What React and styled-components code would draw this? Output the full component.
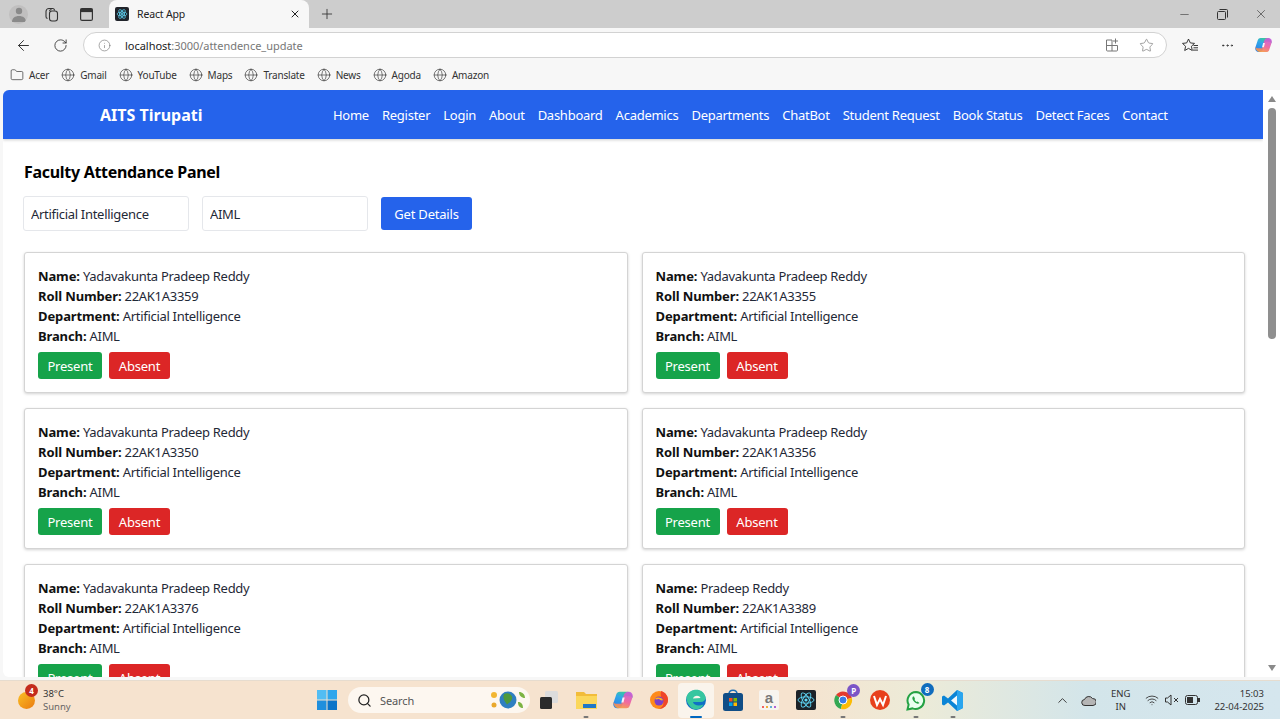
import React from 'react';
import styled, { createGlobalStyle } from 'styled-components';
import {
  ArrowLeft, RotateCw, Info, Star, Folder, Globe, X, Plus, Minus, MoreHorizontal,
  Search, ChevronUp, Wifi,
} from 'lucide-react';

const GlobalStyle = createGlobalStyle`
  html, body { margin: 0; padding: 0; height: 100%; overflow: hidden; }
  body { font-family: "Noto Sans", "Open Sans", sans-serif; }
  * { box-sizing: border-box; }
`;

const FONT = '"Noto Sans", "Open Sans", sans-serif';

const Screen = styled.div`
  width: 1280px;
  height: 719px;
  display: flex;
  flex-direction: column;
  overflow: hidden;
  background: #f7f7f7;
  font-family: ${FONT};
`;

const TabStrip = styled.div`
  height: 28px;
  background: #cdcdcd;
  display: flex;
  align-items: center;
  padding-left: 9px;
  color: #333;
`;

const Avatar = styled.div`
  width: 19px;
  height: 19px;
  border-radius: 50%;
  background: #c0bfbf;
  display: flex;
  align-items: center;
  justify-content: center;
  overflow: hidden;
  margin-right: 14px;
`;

const StripIcon = styled.div`
  width: 19px;
  display: flex;
  justify-content: center;
  margin-right: ${(p) => p.$mr || 0}px;
  margin-left: ${(p) => p.$ml || 0}px;
`;

const Tab = styled.div`
  width: 200px;
  height: 28px;
  background: #f7f7f7;
  border-radius: 8px 8px 0 0;
  display: flex;
  align-items: center;
  padding: 0 8px 0 6px;
  font-size: 10.5px;
  letter-spacing: -0.15px;
  color: #222;
`;

const Favicon = styled.div`
  width: 14px;
  height: 14px;
  border-radius: 2px;
  background: #20232a;
  margin-right: 8px;
  display: flex;
  align-items: center;
  justify-content: center;
`;

const TabTitle = styled.span`
  flex: 1;
`;

const WindowControls = styled.div`
  margin-left: auto;
  display: flex;
  align-items: center;
  gap: 26px;
  padding-right: 12px;
`;

const Toolbar = styled.div`
  height: 34px;
  display: flex;
  align-items: center;
  padding-left: 15px;
  color: #333;
`;

const ToolButton = styled.div`
  width: 17px;
  display: flex;
  justify-content: center;
  margin-right: ${(p) => p.$mr || 0}px;
  margin-left: ${(p) => p.$ml || 0}px;
`;

const AddressBar = styled.div`
  width: 1084px;
  height: 26px;
  margin-left: 14px;
  border: 1px solid #d2d2d2;
  border-radius: 13px;
  background: #fff;
  display: flex;
  align-items: center;
  padding: 0 12px 0 14px;
  font-size: 11px;
  letter-spacing: -0.03px;
  color: #777;
`;

const Host = styled.span`
  color: #222;
`;

const UrlText = styled.span`
  margin-left: 14px;
  flex: 1;
`;

const AppsIcon = styled.span`
  display: flex;
  margin-right: 19px;
`;

const Bookmarks = styled.div`
  height: 27px;
  padding-bottom: 1px;
  display: flex;
  align-items: center;
  padding-left: 10px;
  font-size: 10px;
  letter-spacing: -0.2px;
  color: #333;
  gap: 12px;
`;

const Bookmark = styled.div`
  display: flex;
  align-items: center;
  gap: 5px;
`;

const Viewport = styled.div`
  height: 587px;
  margin: 1px 0 3px 3px;
  display: flex;
  background: #fff;
  border-radius: 6px 0 0 6px;
  overflow: hidden;
`;

const Page = styled.div`
  flex: 1;
  min-width: 0;
  overflow: hidden;
`;

const Scrollbar = styled.div`
  width: 17px;
  background: #fff;
  position: relative;
  display: flex;
  flex-direction: column;
  align-items: center;
  padding-top: 6px;
`;

const ScrollThumb = styled.div`
  width: 8px;
  height: 231px;
  margin-top: 6px;
  border-radius: 4px;
  background: #8f8f8f;
`;

const ArrowUp = styled.div`
  width: 0;
  height: 0;
  border-left: 4px solid transparent;
  border-right: 4px solid transparent;
  border-bottom: 6px solid #8a8a8a;
`;

const ArrowDown = styled.div`
  position: absolute;
  bottom: 6px;
  width: 0;
  height: 0;
  border-left: 4px solid transparent;
  border-right: 4px solid transparent;
  border-top: 6px solid #8a8a8a;
`;

const Nav = styled.nav`
  height: 49px;
  background: #2563eb;
  display: flex;
  align-items: center;
  padding-left: 97px;
  color: #fff;
  box-shadow: 0 1px 3px rgba(0, 0, 0, 0.2);
`;

const Brand = styled.div`
  font-size: 16px;
  font-weight: 700;
  width: 233px;
`;

const NavLinks = styled.div`
  display: flex;
  gap: 13px;
  font-size: 13px;
  letter-spacing: -0.26px;
`;

const Content = styled.main`
  padding: 22px 20px 0 21px;
`;

const Heading = styled.h2`
  margin: 0;
  font-size: 16px;
  line-height: 22px;
  font-weight: 700;
  letter-spacing: -0.3px;
  color: #000;
`;

const Filters = styled.div`
  display: flex;
  align-items: center;
  gap: 13px;
  margin: 13px 0 0 -1px;
`;

const FilterInput = styled.input`
  width: 166px;
  height: 35px;
  border: 1px solid #e5e7eb;
  border-radius: 3px;
  padding: 0 7px;
  font: 13px ${FONT};
  letter-spacing: -0.3px;
  color: #1f2937;
  background: #fff;
  outline: none;
`;

const Btn = styled.button`
  border: 0;
  color: #fff;
  font-family: ${FONT};
  letter-spacing: -0.2px;
  border-radius: 3px;
  background: ${(p) => p.$bg};
  font-size: 13px;
  height: ${(p) => p.$h || 27}px;
  width: ${(p) => p.$w}px;
  padding: 0;
`;

const Grid = styled.div`
  display: grid;
  grid-template-columns: 603.5px 603.5px;
  column-gap: 14px;
  row-gap: 15px;
  margin-top: 21px;
`;

const Card = styled.div`
  height: 141px;
  border: 1px solid #d4d4d4;
  border-radius: 3px;
  padding: 13px 13px 0;
  box-shadow: 0 1px 3px rgba(0, 0, 0, 0.18);
  background: #fff;
`;

const Line = styled.div`
  font-size: 13px;
  line-height: 20px;
  letter-spacing: -0.3px;
  color: #1f2937;
  b { color: #111; font-weight: 700; letter-spacing: -0.12px; }
`;

const Actions = styled.div`
  display: flex;
  gap: 7px;
  margin-top: 6px;
`;

const Taskbar = styled.div`
  flex: 1;
  min-height: 0;
  border-top: 1px solid #e6dccf;
  background: linear-gradient(90deg, #f6e3cf 0%, #f6e3cf 62%, #ecebd8 72%, #d3e5ea 85%, #d5e6ee 100%);
  display: flex;
  align-items: center;
  color: #333;
`;

const Weather = styled.div`
  width: 317px;
  padding-left: 18px;
  display: flex;
  align-items: center;
  gap: 8px;
  font-size: 9.5px;
  line-height: 13px;
`;

const Sun = styled.div`
  width: 17px;
  height: 17px;
  border-radius: 50%;
  background: linear-gradient(135deg, #fbbf24, #ea7a10);
  position: relative;
`;

const Badge = styled.span`
  position: absolute;
  top: ${(p) => p.$top}px;
  right: ${(p) => p.$right}px;
  width: 13px;
  height: 13px;
  border-radius: 50%;
  color: #fff;
  background: ${(p) => p.$bg};
  font-size: 8px;
  font-weight: 700;
  line-height: 13px;
  text-align: center;
`;

const MutedText = styled.div`
  color: #666;
`;

const SearchBox = styled.div`
  width: 182px;
  height: 26px;
  margin-left: 11px;
  border-radius: 13px;
  background: #fdf7f0;
  display: flex;
  align-items: center;
  padding-left: 9px;
  font-size: 11px;
  letter-spacing: -0.1px;
  color: #555;
  gap: 8px;
`;

const SearchArt = styled.div`
  margin-left: auto;
  margin-right: 4px;
  display: flex;
`;

const TaskIcons = styled.div`
  display: flex;
  margin-left: 1px;
`;

const TaskIcon = styled.div`
  width: 36.700px;
  height: 35px;
  display: flex;
  align-items: center;
  justify-content: center;
  position: relative;
  border-radius: 4px;
  background: ${(p) => (p.$active ? '#faf4ec' : 'transparent')};
`;

const RunDot = styled.span`
  position: absolute;
  bottom: 0;
  left: 50%;
  transform: translateX(-50%);
  width: ${(p) => (p.$active ? 12 : 5)}px;
  height: 2px;
  border-radius: 1px;
  background: ${(p) => (p.$active ? '#0067c0' : '#777')};
`;

const Tray = styled.div`
  margin-left: auto;
  display: flex;
  align-items: center;
  padding-right: 16px;
  font-size: 9.5px;
  color: #333;
`;

const Lang = styled.div`
  text-align: center;
  line-height: 13px;
  margin: 0 15px 0 15px;
`;

const Clock = styled.div`
  text-align: right;
  line-height: 13px;
  margin-left: 14px;
`;

const TrayGroup = styled.div`
  display: flex;
  align-items: center;
  gap: 6px;
`;

const StudentLine = ({ label, value }) => (
  <Line>
    <b>{label}:</b> {value}
  </Line>
);

const ReactMark = ({ size = 12 }) => (
  <svg width={size} height={size} viewBox="0 0 24 24" fill="none" stroke="#61dafb" strokeWidth="1.4">
    <circle cx="12" cy="12" r="2" fill="#61dafb" stroke="none" />
    <ellipse cx="12" cy="12" rx="10" ry="4" />
    <ellipse cx="12" cy="12" rx="10" ry="4" transform="rotate(60 12 12)" />
    <ellipse cx="12" cy="12" rx="10" ry="4" transform="rotate(120 12 12)" />
  </svg>
);

const CopilotMark = ({ id, size = 20 }) => (
  <svg width={size} height={size} viewBox="0 0 24 24">
    <defs>
      <linearGradient id={`${id}-l`} x1="0.2" y1="1" x2="0.7" y2="0">
        <stop offset="0" stopColor="#2b7fe8" />
        <stop offset="0.6" stopColor="#30a8e8" />
        <stop offset="1" stopColor="#3bd08a" />
      </linearGradient>
      <linearGradient id={`${id}-r`} x1="0.7" y1="0" x2="0.3" y2="1">
        <stop offset="0" stopColor="#c65be0" />
        <stop offset="0.55" stopColor="#f0609a" />
        <stop offset="1" stopColor="#f7a13c" />
      </linearGradient>
    </defs>
    <path d="M8 2h9c3 0 5 2 6 5l1 3c-1-2-3-2.500-5-2.500h-5L11 18c-.6 2.500-2.500 4-5 4H5c-3 0-5.500-3-4.500-6.500L4 5c.6-2 2-3 4-3z" fill={`url(#${id}-l)`} />
    <path d="M16 22H7c-3 0-5-2-6-5l-1-3c1 2 3 2.500 5 2.500h5L13 6c.6-2.500 2.500-4 5-4h1c3 0 5.500 3 4.500 6.500L20 19c-.6 2-2 3-4 3z" fill={`url(#${id}-r)`} opacity="0.92" />
    <path d="M11.500 9h2.500l-1.500 6H10z" fill="#fff" opacity="0.9" />
  </svg>
);

const WorkspacesIcon = () => (
  <svg width="15" height="15" viewBox="0 0 15 15" fill="none" stroke="#333" strokeWidth="1.1">
    <rect x="5.500" y="4" width="8" height="10" rx="2.500" />
    <path d="M3.500 11.500A2 2 0 0 1 2 9.500V4.500A3 3 0 0 1 5 1.500h3.500a2 2 0 0 1 2 2" />
    <path d="M5.500 4a2 2 0 0 1 2-1.500" />
  </svg>
);

const TabActionsIcon = () => (
  <svg width="13" height="13" viewBox="0 0 13 13">
    <rect x="0.600" y="0.600" width="11.800" height="11.800" rx="1.500" fill="none" stroke="#333" strokeWidth="1.200" />
    <rect x="0.600" y="0.600" width="11.800" height="3.500" fill="#333" />
  </svg>
);

const RestoreIcon = () => (
  <svg width="11" height="11" viewBox="0 0 11 11" fill="none" stroke="#333">
    <rect x="0.500" y="2.500" width="8" height="8" rx="1" />
    <path d="M2.500 .500h7a1 1 0 0 1 1 1v7" />
  </svg>
);

const AppsGlyph = () => (
  <svg width="14" height="14" viewBox="0 0 14 14" fill="none" stroke="#777">
    <path d="M.500 2h5.500v11H1.500a1 1 0 0 1-1-1zM.500 7.500H11.500V12a1 1 0 0 1-1 1H6" />
    <path d="M9.500 0.500v5M7 3h5" />
  </svg>
);

const FavoritesIcon = () => (
  <svg width="17" height="15" viewBox="0 0 17 15" fill="none" stroke="#222" strokeWidth="0.900" strokeLinejoin="round">
    <path d="M6.500 1l1.800 3.900 4.200.5-3.100 2.900.9 4.200-3.800-2.100-3.800 2.100.9-4.200L.500 5.400l4.200-.5z" />
    <path d="M11.500 7.500H16M11.500 9.800H16M11 12.100H16" />
  </svg>
);

const WindowsLogo = () => (
  <svg width="20" height="20" viewBox="0 0 20 20">
    <rect x="0" y="0" width="9.500" height="9.500" fill="#52bdf3" />
    <rect x="10.500" y="0" width="9.500" height="9.500" fill="#2fa6ec" />
    <rect x="0" y="10.500" width="9.500" height="9.500" fill="#1f8fdd" />
    <rect x="10.500" y="10.500" width="9.500" height="9.500" fill="#0b74c8" />
  </svg>
);

const students = [
  { name: 'Yadavakunta Pradeep Reddy', roll: '22AK1A3359' },
  { name: 'Yadavakunta Pradeep Reddy', roll: '22AK1A3355' },
  { name: 'Yadavakunta Pradeep Reddy', roll: '22AK1A3350' },
  { name: 'Yadavakunta Pradeep Reddy', roll: '22AK1A3356' },
  { name: 'Yadavakunta Pradeep Reddy', roll: '22AK1A3376' },
  { name: 'Pradeep Reddy', roll: '22AK1A3389' },
];

const navItems = ['Home', 'Register', 'Login', 'About', 'Dashboard', 'Academics', 'Departments', 'ChatBot', 'Student Request', 'Book Status', 'Detect Faces', 'Contact'];
const bookmarks = ['Gmail', 'YouTube', 'Maps', 'Translate', 'News', 'Agoda', 'Amazon'];

const App = () => (
  <Screen>
    <GlobalStyle />
    <TabStrip>
      <Avatar>
        <svg width="14" height="16" viewBox="0 0 14 16" fill="#8a8a8a">
          <circle cx="7" cy="5" r="3.200" />
          <path d="M0 16c0-4 3-6 7-6s7 2 7 6z" />
        </svg>
      </Avatar>
      <StripIcon $mr={16}><WorkspacesIcon /></StripIcon>
      <StripIcon $mr={13}><TabActionsIcon /></StripIcon>
      <Tab>
        <Favicon><ReactMark /></Favicon>
        <TabTitle>React App</TabTitle>
        <X size={12} />
      </Tab>
      <StripIcon $ml={8}><Plus size={16} strokeWidth={1.3} /></StripIcon>
      <WindowControls>
        <Minus size={13} strokeWidth={1.1} />
        <RestoreIcon />
        <X size={14} strokeWidth={1.1} />
      </WindowControls>
    </TabStrip>
    <Toolbar>
      <ToolButton $mr={20}><ArrowLeft size={17} strokeWidth={1.4} /></ToolButton>
      <ToolButton><RotateCw size={15} strokeWidth={1.4} /></ToolButton>
      <AddressBar>
        <Info size={13} strokeWidth={1.2} />
        <UrlText><Host>localhost</Host>:3000/attendence_update</UrlText>
        <AppsIcon><AppsGlyph /></AppsIcon>
        <Star size={15} strokeWidth={1.1} />
      </AddressBar>
      <ToolButton $ml={15}><FavoritesIcon /></ToolButton>
      <ToolButton $ml={20}><MoreHorizontal size={15} strokeWidth={1.5} /></ToolButton>
      <ToolButton $ml={19}><CopilotMark id="edge-copilot" /></ToolButton>
    </Toolbar>
    <Bookmarks>
      <Bookmark><Folder size={14} strokeWidth={1.2} />Acer</Bookmark>
      {bookmarks.map((b) => (
        <Bookmark key={b}><Globe size={14} strokeWidth={1.1} />{b}</Bookmark>
      ))}
    </Bookmarks>
    <Viewport>
      <Page>
        <Nav>
          <Brand>AITS Tirupati</Brand>
          <NavLinks>
            {navItems.map((n) => <span key={n}>{n}</span>)}
          </NavLinks>
        </Nav>
        <Content>
          <Heading>Faculty Attendance Panel</Heading>
          <Filters>
            <FilterInput readOnly value="Artificial Intelligence" />
            <FilterInput readOnly value="AIML" />
            <Btn $bg="#2563eb" $w={91} $h={33}>Get Details</Btn>
          </Filters>
          <Grid>
            {students.map((s) => (
              <Card key={s.roll}>
                <StudentLine label="Name" value={s.name} />
                <StudentLine label="Roll Number" value={s.roll} />
                <StudentLine label="Department" value="Artificial Intelligence" />
                <StudentLine label="Branch" value="AIML" />
                <Actions>
                  <Btn $bg="#16a34a" $w={64}>Present</Btn>
                  <Btn $bg="#dc2626" $w={61}>Absent</Btn>
                </Actions>
              </Card>
            ))}
          </Grid>
        </Content>
      </Page>
      <Scrollbar>
        <ArrowUp />
        <ScrollThumb />
        <ArrowDown />
      </Scrollbar>
    </Viewport>
    <Taskbar>
      <Weather>
        <Sun>
          <Badge $bg="#c42b1c" $top={-8} $right={-3}>4</Badge>
        </Sun>
        <div>
          <div>38°C</div>
          <MutedText>Sunny</MutedText>
        </div>
      </Weather>
      <WindowsLogo />
      <SearchBox>
        <Search size={15} color="#222" />
        Search
        <SearchArt>
          <svg width="37" height="22" viewBox="0 0 37 22">
            <circle cx="19" cy="11" r="8.500" fill="#2f7fc1" />
            <path d="M15 5c3-1.500 7-.5 8 2.500s-2 6-5 8c-2-3-5-6-3-10.500z" fill="#4f9a3b" />
            <circle cx="5" cy="6" r="3" fill="#f2b632" />
            <circle cx="5" cy="16" r="2.500" fill="#e9a82c" />
            <path d="M30 3c3.500 0 6 2.500 6 6-3.500 0-6-2.500-6-6zM29 13c3.500 0 5 2.500 5 6-3.500 0-5-2.500-5-6z" fill="#7cb342" />
          </svg>
        </SearchArt>
      </SearchBox>
      <TaskIcons>
        <TaskIcon>
          <svg width="20" height="20" viewBox="0 0 20 20">
            <rect x="6" y="1" width="13" height="12" rx="1.500" fill="#dcdcdc" />
            <rect x="1" y="7" width="12" height="12" rx="1.500" fill="#2b2b2b" />
          </svg>
        </TaskIcon>
        <TaskIcon>
          <svg width="21" height="19" viewBox="0 0 21 19">
            <path d="M0 1h8l2 2h11v13H0z" fill="#f2bc3a" />
            <rect x="0" y="5" width="21" height="13" fill="#fbd75b" />
            <rect x="7" y="13" width="13" height="4" fill="#1f78c8" />
          </svg>
          <RunDot />
        </TaskIcon>
        <TaskIcon><CopilotMark id="bar-copilot" /></TaskIcon>
        <TaskIcon>
          <svg width="20" height="20" viewBox="0 0 20 20">
            <circle cx="10" cy="10" r="9" fill="#ff8a1a" />
            <path d="M12 1c4 1 7 4.500 7 9s-4 9-9 9c4-2 5-5 4-8-1-2-3-5-2-10z" fill="#f0452a" />
            <circle cx="10" cy="11" r="4.500" fill="#7c3fc9" />
            <path d="M6 9c2-2 6-2 8 1-1 1-3 0-4-1-1 0-3 1-4 0z" fill="#ffb020" />
          </svg>
        </TaskIcon>
        <TaskIcon $active>
          <svg width="22" height="22" viewBox="0 0 22 22">
            <circle cx="11" cy="11" r="10" fill="#0f6fc6" />
            <path d="M1.500 8C4-1 18-2 20.500 8c.7 3-1.500 5-5 5H8c.5 3.500 6 4.500 10.500 2.500C16 21 9 22 5.500 18 3 15 1 12 1.500 8z" fill="#37c6a0" />
            <path d="M8 9.500c1-3.500 6.500-3.500 7.500-.5z" fill="#faf4ec" />
          </svg>
          <RunDot $active />
        </TaskIcon>
        <TaskIcon>
          <svg width="20" height="22" viewBox="0 0 20 22">
            <path d="M6 5c0-5 8-5 8 0" fill="none" stroke="#1a6fb5" strokeWidth="1.500" />
            <rect x="0" y="4" width="20" height="18" rx="2.500" fill="#104d86" />
            <rect x="6" y="9" width="3.500" height="3.500" fill="#f25022" />
            <rect x="10.500" y="9" width="3.500" height="3.500" fill="#7fba00" />
            <rect x="6" y="13.500" width="3.500" height="3.500" fill="#00a4ef" />
            <rect x="10.500" y="13.500" width="3.500" height="3.500" fill="#ffb900" />
          </svg>
        </TaskIcon>
        <TaskIcon>
          <svg width="20" height="20" viewBox="0 0 20 20">
            <rect width="20" height="20" rx="2" fill="#f7f4ef" />
            <text x="10" y="13" textAnchor="middle" fontSize="15" fontWeight="700" fill="#777" fontFamily="Liberation Sans, sans-serif">a</text>
            <circle cx="4" cy="17" r="1" fill="#e33" />
            <circle cx="8" cy="17" r="1" fill="#e90" />
            <circle cx="12" cy="17" r="1" fill="#39c" />
            <circle cx="16" cy="17" r="1" fill="#93c" />
          </svg>
        </TaskIcon>
        <TaskIcon>
          <svg width="20" height="20" viewBox="0 0 20 20" fill="none" stroke="#61dafb" strokeWidth="0.900">
            <rect width="20" height="20" rx="2" fill="#1c2228" stroke="none" />
            <circle cx="10" cy="10" r="1.600" fill="#61dafb" stroke="none" />
            <ellipse cx="10" cy="10" rx="8" ry="3.200" />
            <ellipse cx="10" cy="10" rx="8" ry="3.200" transform="rotate(60 10 10)" />
            <ellipse cx="10" cy="10" rx="8" ry="3.200" transform="rotate(120 10 10)" />
          </svg>
        </TaskIcon>
        <TaskIcon>
          <svg width="20" height="20" viewBox="0 0 20 20">
            <path d="M10 10L3 5a9 9 0 0 1 15.800 3z" fill="#e33b2e" />
            <path d="M10 10L3 5a9 9 0 0 0 5 14z" fill="#34a853" />
            <path d="M10 10l8.800-2A9 9 0 0 1 8 19z" fill="#fbbc05" />
            <circle cx="10" cy="10" r="4" fill="#3b7de8" stroke="#fff" />
          </svg>
          <Badge $bg="#7b55c7" $top={1} $right={1}>P</Badge>
          <RunDot />
        </TaskIcon>
        <TaskIcon>
          <svg width="20" height="20" viewBox="0 0 20 20">
            <circle cx="10" cy="10" r="10" fill="#e8401c" />
            <path d="M4 6l3 9 3-6 3 6 3-9" fill="none" stroke="#fff" strokeWidth="2" />
          </svg>
        </TaskIcon>
        <TaskIcon>
          <svg width="21" height="21" viewBox="0 0 21 21">
            <path d="M10 2a8.500 8.500 0 0 0-7.400 12.600L1.500 19.500l5-1.100A8.500 8.500 0 1 0 10 2z" fill="#eafff0" stroke="#25a244" strokeWidth="2" />
            <path d="M7 6.500c-1 1-1 3 1 5s4 3 5.500 1.500l-2-1.500-1 .5-2-2 .5-1-1-2.500z" fill="#25a244" />
          </svg>
          <Badge $bg="#0f6cbd" $top={0} $right={1}>8</Badge>
          <RunDot />
        </TaskIcon>
        <TaskIcon>
          <svg width="21" height="21" viewBox="0 0 21 21">
            <path d="M15 0l6 3v15l-6 3L6 12.500 2 15.500 0 14.500v-8l2-1 4 3z" fill="#0a84d6" />
            <path d="M15 5.500L9 10.500l6 5z" fill="#fff" opacity="0.95" />
            <path d="M15 0l6 3v15l-6 3z" fill="#2aa5ee" />
          </svg>
          <RunDot />
        </TaskIcon>
      </TaskIcons>
      <Tray>
        <ChevronUp size={15} strokeWidth={1.5} style={{ marginRight: 11 }} />
        <svg width="15" height="11" viewBox="0 0 15 11">
          <path d="M4 10.500a3 3 0 0 1-.5-6 4.500 4.500 0 0 1 8-1 3.500 3.500 0 0 1 .5 7z" fill="#b5b5b5" stroke="#333" />
        </svg>
        <Lang>ENG<br />IN</Lang>
        <TrayGroup>
          <Wifi size={14} strokeWidth={1.5} />
          <svg width="14" height="12" viewBox="0 0 14 12" fill="none" stroke="#333">
            <path d="M.500 4h2L6 1v10L2.500 8h-2zM9 4l4 4M13 4l-4 4" />
          </svg>
          <svg width="15" height="10" viewBox="0 0 15 10">
            <rect x="0.500" y="0.500" width="12" height="9" rx="2" fill="none" stroke="#333" />
            <rect x="2" y="2" width="6" height="6" fill="#333" />
            <rect x="13" y="3" width="2" height="4" fill="#333" />
          </svg>
        </TrayGroup>
        <Clock>15:03<br />22-04-2025</Clock>
      </Tray>
    </Taskbar>
  </Screen>
);

export default App;
